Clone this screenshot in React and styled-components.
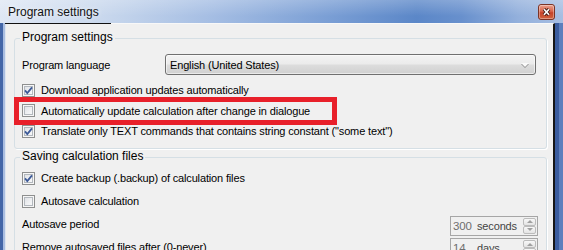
import React from "react"
import styled, { createGlobalStyle } from "styled-components"

const GlobalStyle = createGlobalStyle`
  html, body {
    margin: 0;
    padding: 0;
    overflow: hidden;
    background: #f0f0f0;
  }
  body {
    font-family: "Liberation Sans", Arial, sans-serif;
    font-size: 11px;
    color: #000;
  }
`

const Window = styled.div`
  width: 563px;
  height: 280px;
  display: flex;
  flex-direction: column;
`

const TitleBar = styled.div`
  height: 23px;
  flex: none;
  box-sizing: border-box;
  padding: 1px 8px 0 8px;
  display: flex;
  align-items: center;
  background:
    linear-gradient(180deg, rgba(255, 255, 255, 0.22), rgba(255, 255, 255, 0) 70%),
    linear-gradient(90deg, #dfe7f4 0%, #c9d8ed 18%, #a4bde3 38%, #7b9fd5 58%, #5b87c8 74%, #6890cd 82%, #93b0dc 92%, #a7bee2 100%);
`

const Title = styled.span`
  font-size: 12px;
  color: #111;
  text-shadow: 0 0 5px rgba(255, 255, 255, 0.9);
`

const CloseButton = styled.button`
  margin-left: auto;
  width: 17px;
  height: 16px;
  padding: 0;
  border: 0;
  background: none;
  display: block;
`

const Frame = styled.div`
  flex: 1;
  display: flex;
  min-height: 0;
`

const LeftEdge = styled.div`
  width: 6px;
  flex: none;
  background: linear-gradient(90deg, #4366a8 0 3px, #a9bde0 3px 5px, #dde5f1 5px 6px);
`

const RightEdge = styled.div`
  width: 8px;
  flex: none;
  background: linear-gradient(90deg, #3b5d9f 0 4px, #5d7fbd 4px 8px);
`

const Client = styled.div`
  flex: 1;
  position: relative;
  background: #f0f0f0;
  border-top: 1px solid #f8f8f8;
  border-right: 2px solid #161616;
  padding: 6px 6px 0 8px;
  display: flex;
  flex-direction: column;

  &::before {
    content: "";
    position: absolute;
    top: -1px;
    left: -1px;
    width: 106px;
    height: 1px;
    background: #111;
  }
`

const GroupBox = styled.fieldset`
  margin: 0;
  min-width: 0;
  padding: ${p => p.$padTop}px 8px ${p => p.$padBottom}px 7px;
  border: 1px solid #d5dfe5;
  border-radius: 3px;
  box-shadow: 1px 1px 0 #fff;
  display: flex;
  flex-direction: column;
`

const Legend = styled.legend`
  margin-left: -2px;
  padding: 0 2px 2px;
  font-size: 12px;
  line-height: 14px;
  color: #000;
`

const FieldRow = styled.div`
  display: flex;
  align-items: center;
  height: 21px;
  margin-bottom: 5px;
`

const FieldLabel = styled.span`
  width: 143px;
  flex: none;
  letter-spacing: -0.15px;
`

const Select = styled.div`
  width: 371px;
  height: 21px;
  box-sizing: border-box;
  border: 1px solid #707070;
  border-radius: 3px;
  padding: 0 6px 0 4px;
  display: flex;
  align-items: center;
  background: linear-gradient(180deg, #f3f3f3 0%, #ebebeb 48%, #dddddd 52%, #d0d0d0 100%);
  box-shadow: inset 0 0 0 1px rgba(255, 255, 255, 0.55);
  letter-spacing: -0.15px;
`

const SelectArrow = styled.span`
  margin-left: auto;
  width: 0;
  height: 0;
  border-left: 4px solid transparent;
  border-right: 4px solid transparent;
  border-top: 4px solid #fafafa;
  filter: drop-shadow(0 1px 0 #8a8a8a);
`

const CheckRow = styled.label`
  position: relative;
  display: flex;
  align-items: center;
  gap: 6px;
  height: ${p => p.$h}px;
  letter-spacing: -0.15px;

  ${p =>
    p.$marked &&
    `
    &::after {
      content: "";
      position: absolute;
      top: -3.5px;
      bottom: -4px;
      left: -8px;
      width: 323px;
      box-sizing: border-box;
      border: 5px solid #e8202a;
    }
  `}
`

const Box = styled.span`
  width: 13px;
  height: 13px;
  flex: none;
  box-sizing: border-box;
  border: 1px solid #8e8f8f;
  background: linear-gradient(135deg, #d9dce1 0%, #f1f2f4 60%, #fbfbfb 100%);
  box-shadow: inset 0 0 0 1px #f6f6f6, inset 0 0 0 2px #b3b8be;
  display: flex;
  align-items: center;
  justify-content: center;
`

const SpinRow = styled.div`
  display: flex;
  align-items: center;
  height: ${p => p.$h}px;
  letter-spacing: -0.15px;
`

const Spin = styled.div`
  margin-left: auto;
  margin-top: 3px;
  width: 88px;
  height: 20px;
  box-sizing: border-box;
  border: 1px solid #a6a6a6;
  background: #f0f0f0;
  display: flex;
  align-items: center;
  padding: 0 1px 0 2px;
`

const SpinValue = styled.span`
  font-size: 11.5px;
  color: #6e6e6e;
  width: 24px;
  flex: none;
`

const SpinUnit = styled.span`
  color: #444;
`

const SpinButtons = styled.div`
  margin-left: auto;
  width: 13px;
  height: 16px;
  display: flex;
  flex-direction: column;
`

const SpinButton = styled.span`
  flex: 1;
  box-sizing: border-box;
  border: 1px solid #bcbcbc;
  border-radius: 2px;
  background: linear-gradient(180deg, #f8f8f8, #e4e4e4);
  display: flex;
  align-items: center;
  justify-content: center;

  &::before {
    content: "";
    border-left: 3px solid transparent;
    border-right: 3px solid transparent;
    ${p => (p.$down ? "border-top: 3px solid #a0a0a0;" : "border-bottom: 3px solid #a0a0a0;")}
  }
`

const CheckMark = () => (
  <svg width="9" height="9" viewBox="0 0 9 9">
    <path d="M1 4.4 L3.3 7 L8 1.4" fill="none" stroke="#3d5a98" strokeWidth="1.8" />
  </svg>
)

const Check = ({ checked, children, marked, h = 20.5 }) => (
  <CheckRow $marked={marked} $h={h}>
    <Box>{checked && <CheckMark />}</Box>
    <span>{children}</span>
  </CheckRow>
)

const CloseIcon = () => (
  <svg width="17" height="16" viewBox="0 0 17 16">
    <defs>
      <linearGradient id="closeGrad" x1="0" y1="0" x2="0" y2="1">
        <stop offset="0" stopColor="#eba692" />
        <stop offset="0.45" stopColor="#d9654c" />
        <stop offset="0.55" stopColor="#c5432a" />
        <stop offset="1" stopColor="#d2653f" />
      </linearGradient>
    </defs>
    <rect x="0.5" y="0.5" width="16" height="15" rx="2.5" fill="url(#closeGrad)" stroke="#7b3426" />
    <rect x="1.5" y="1.5" width="14" height="13" rx="1.5" fill="none" stroke="rgba(255,255,255,0.35)" />
    <path d="M6 5.2 L11 10.8 M11 5.2 L6 10.8" stroke="#3e1a12" strokeWidth="3.4" />
    <path d="M6 5.2 L11 10.8 M11 5.2 L6 10.8" stroke="#fff" strokeWidth="1.7" />
  </svg>
)

const Spinner = ({ value, unit }) => (
  <Spin>
    <SpinValue>{value}</SpinValue>
    <SpinUnit>{unit}</SpinUnit>
    <SpinButtons>
      <SpinButton />
      <SpinButton $down />
    </SpinButtons>
  </Spin>
)

export default function App() {
  return (
    <>
      <GlobalStyle />
      <Window>
        <TitleBar>
          <Title>Program settings</Title>
          <CloseButton aria-label="Close">
            <CloseIcon />
          </CloseButton>
        </TitleBar>
        <Frame>
          <LeftEdge />
          <Client>
            <GroupBox $padTop={8} $padBottom={6.5}>
              <Legend>Program settings</Legend>
              <FieldRow>
                <FieldLabel>Program language</FieldLabel>
                <Select>
                  English (United States)
                  <SelectArrow />
                </Select>
              </FieldRow>
              <Check checked>Download application updates automatically</Check>
              <Check marked>Automatically update calculation after change in dialogue</Check>
              <Check checked>
                Translate only TEXT commands that contains string constant ("some text")
              </Check>
            </GroupBox>
            <GroupBox $padTop={1.5} $padBottom={6}>
              <Legend>Saving calculation files</Legend>
              <Check checked h={23}>
                Create backup (.backup) of calculation files
              </Check>
              <Check h={23}>Autosave calculation</Check>
              <SpinRow $h={23}>
                Autosave period
                <Spinner value="300" unit="seconds" />
              </SpinRow>
              <SpinRow $h={22}>
                Remove autosaved files after (0-never)
                <Spinner value="14" unit="days" />
              </SpinRow>
            </GroupBox>
          </Client>
          <RightEdge />
        </Frame>
      </Window>
    </>
  )
}
